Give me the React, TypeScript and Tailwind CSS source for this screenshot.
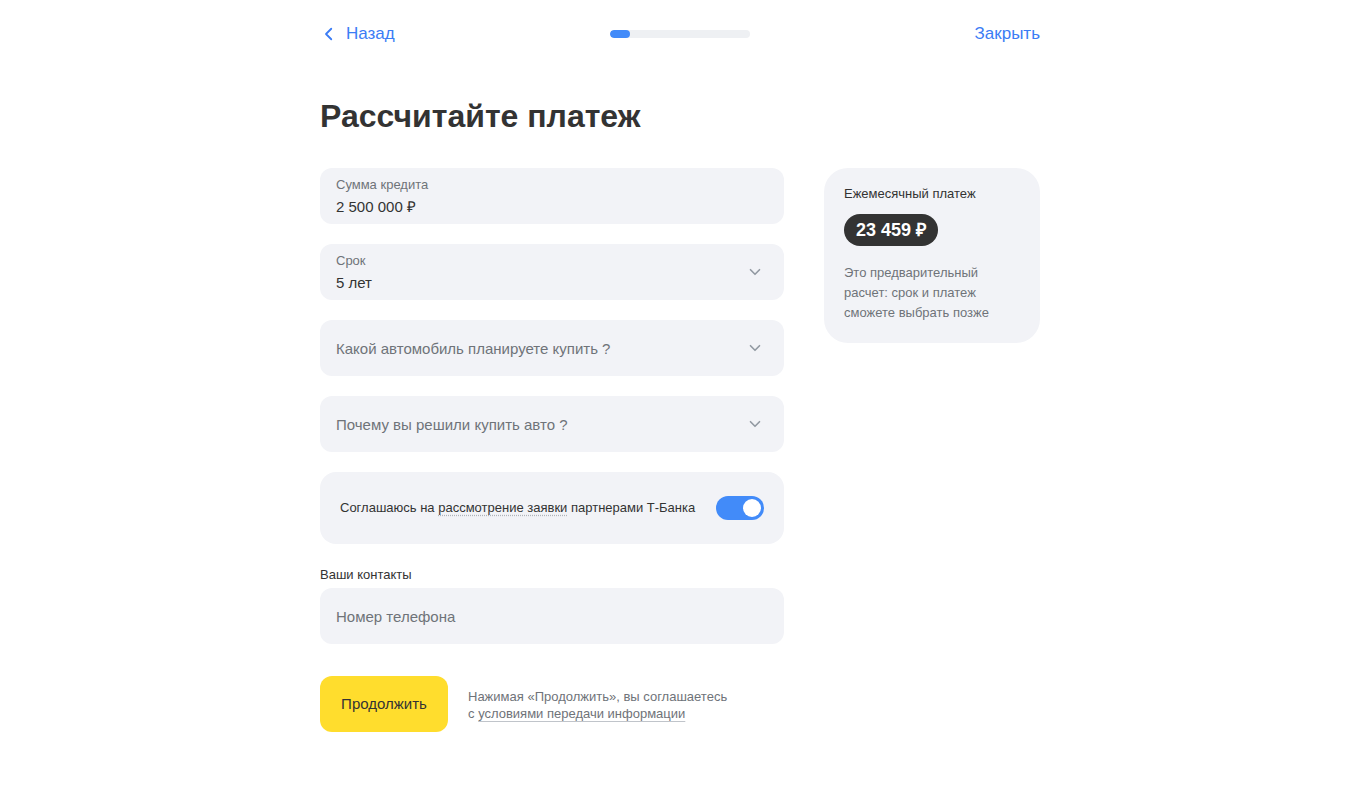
import * as React from 'react';

const Chevron = ({ className }: { className?: string }) => (
  <svg viewBox="0 0 24 24" className={className} fill="none" stroke="currentColor" strokeWidth={2.2} strokeLinecap="round" strokeLinejoin="round">
    <path d="M6 9l6 6 6-6" />
  </svg>
);

const SelectField = ({ placeholder }: { placeholder: string }) => (
  <div className="h-14 rounded-xl bg-[#f2f3f7] flex items-center justify-between pl-4 pr-5">
    <span className="pt-[2px] text-[15px] text-[#6f7379]">{placeholder}</span>
    <Chevron className="w-[18px] h-[18px] text-[#9299a2]" />
  </div>
);

export default function App() {
  const [agree, setAgree] = React.useState(true);

  return (
    <div className="min-h-screen bg-white font-['Liberation_Sans',Arial,sans-serif] text-[#333333]">
      <div className="w-[720px] mx-auto">
        {/* Header */}
        <div className="h-[68px] grid grid-cols-3 items-center">
          <button className="justify-self-start flex items-center gap-2 text-[#3b7cf5] text-[17px]">
            <svg viewBox="0 0 24 24" className="w-[18px] h-[18px]" fill="none" stroke="currentColor" strokeWidth={2.4} strokeLinecap="round" strokeLinejoin="round">
              <path d="M15 5l-7 7 7 7" />
            </svg>
            Назад
          </button>
          <div className="justify-self-center w-[140px] h-2 rounded-full bg-[#eef0f3] overflow-hidden">
            <div className="w-5 h-2 rounded-full bg-[#428bf9]" />
          </div>
          <button className="justify-self-end text-[#3b7cf5] text-[17px]">Закрыть</button>
        </div>

        {/* Title */}
        <h1 className="mt-[26px] text-[32px] leading-[44px] font-bold text-[#333333]">
          Рассчитайте платеж
        </h1>

        <div className="mt-[30px] flex gap-10 items-start">
          {/* Left column */}
          <div className="w-[464px] flex flex-col">
            <div className="h-14 rounded-xl bg-[#f2f3f7] flex flex-col pt-[9px] px-4">
              <span className="text-[13px] leading-[16px] text-[#6f7379]">Сумма кредита</span>
              <span className="mt-[3px] text-[15px] leading-[22px] text-[#333333]">2 500 000 ₽</span>
            </div>

            <div className="mt-5 h-14 rounded-xl bg-[#f2f3f7] flex items-center justify-between pl-4 pr-5">
              <div className="flex flex-col pt-[3px]">
                <span className="text-[13px] leading-[16px] text-[#6f7379]">Срок</span>
                <span className="mt-[3px] text-[15px] leading-[22px] text-[#333333]">5 лет</span>
              </div>
              <Chevron className="w-[18px] h-[18px] text-[#9299a2]" />
            </div>

            <div className="mt-5">
              <SelectField placeholder="Какой автомобиль планируете купить ?" />
            </div>
            <div className="mt-5">
              <SelectField placeholder="Почему вы решили купить авто ?" />
            </div>

            <div className="mt-5 h-[72px] rounded-2xl bg-[#f2f3f7] flex items-center justify-between pl-5 pr-5">
              <span className="text-[13px] text-[#333333] whitespace-nowrap">
                Соглашаюсь на{' '}
                <span className="underline decoration-dotted decoration-[#b0b4ba] underline-offset-[3px]">рассмотрение заявки</span>{' '}
                партнерами Т-Банка
              </span>
              <button
                onClick={() => setAgree(!agree)}
                className={
                  agree
                    ? 'w-12 h-6 rounded-full bg-[#428bf9] flex items-center justify-end px-[3px]'
                    : 'w-12 h-6 rounded-full bg-[#c7cbd1] flex items-center justify-start px-[3px]'
                }
              >
                <span className="w-[18px] h-[18px] rounded-full bg-white" />
              </button>
            </div>

            <div className="mt-[23px] text-[13px] leading-[16px] text-[#333333]">Ваши контакты</div>
            <div className="mt-[5px] h-14 rounded-xl bg-[#f2f3f7] flex items-center px-4">
              <span className="pt-[2px] text-[15px] text-[#6f7379]">Номер телефона</span>
            </div>

            <div className="mt-8 flex items-center gap-5">
              <button className="w-32 h-14 rounded-xl bg-[#ffdd2d] text-[15px] text-[#333333]">Продолжить</button>
              <p className="pt-[1px] text-[13px] leading-[17px] text-[#6f7379]">
                Нажимая «Продолжить», вы соглашаетесь
                <br />с{' '}
                <span className="underline decoration-[#c0c4ca] underline-offset-[3px]">условиями передачи информации</span>
              </p>
            </div>
          </div>

          {/* Right card */}
          <div className="w-[216px] rounded-3xl bg-[#f2f3f7] px-5 pt-[18px] pb-[20px]">
            <div className="text-[13px] leading-[16px] text-[#333333]">Ежемесячный платеж</div>
            <div className="mt-[12px] inline-flex h-8 items-center rounded-full bg-[#333333] px-3 text-white text-[18px] font-bold">
              23 459 ₽
            </div>
            <p className="mt-[17px] text-[13px] leading-[20px] text-[#6f7379]">
              Это предварительный расчет: срок и платеж сможете выбрать позже
            </p>
          </div>
        </div>
      </div>
    </div>
  );
}
